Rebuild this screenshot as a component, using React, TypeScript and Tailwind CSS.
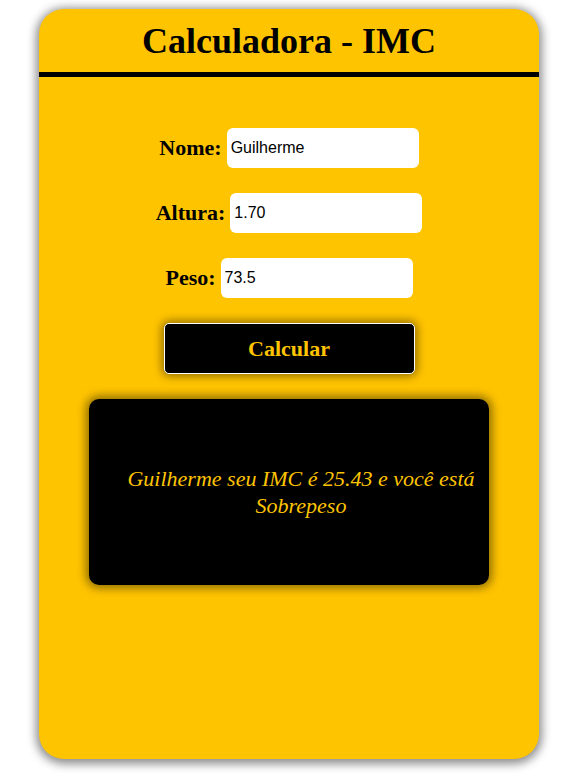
import React from "react";

export default function App() {
  const serif = { fontFamily: '"Liberation Serif", "Times New Roman", serif' };
  return (
    <div className="min-h-[781px] w-[572px] bg-white pt-[9px] pl-[39px]">
      <div
        className="w-[500px] h-[750px] rounded-[25px] bg-[#ffc400] shadow-[0_2px_10px_3px_rgba(0,0,0,0.45)] overflow-hidden flex flex-col"
        style={serif}
      >
        <div className="h-[63px] flex items-center justify-center">
          <h1 className="text-[36px] font-bold text-black leading-none" style={serif}>
            Calculadora - IMC
          </h1>
        </div>
        <div className="h-[5px] bg-black" />
        <div className="flex flex-col items-center pt-[51px] gap-[25px]">
          {[
            { label: "Nome:", value: "Guilherme" },
            { label: "Altura:", value: "1.70" },
            { label: "Peso:", value: "73.5" },
          ].map((r) => (
            <div key={r.label} className="flex items-center gap-[5px]">
              <label className="text-[22px] font-bold text-black leading-none" style={serif}>
                {r.label}
              </label>
              <input
                readOnly
                value={r.value}
                className="w-[192px] h-[40px] rounded-[6px] bg-white px-[4px] text-[16px] text-black outline-none border-0"
                style={{ fontFamily: '"Liberation Sans", Arial, sans-serif' }}
              />
            </div>
          ))}
          <button
            className="w-[251px] h-[51px] rounded-[5px] bg-black border border-white text-[#ffc400] text-[22px] font-bold shadow-[0_0_10px_2px_rgba(0,0,0,0.45)]"
            style={serif}
          >
            Calcular
          </button>
          <div className="w-[400px] h-[186px] rounded-[10px] bg-black shadow-[0_0_10px_3px_rgba(0,0,0,0.45)] flex items-center justify-center pl-[36px] pr-[12px]">
            <p className="italic text-[22px] leading-[27px] text-[#ffc400] text-center" style={serif}>
              Guilherme seu IMC é 25.43 e você está Sobrepeso
            </p>
          </div>
        </div>
      </div>
    </div>
  );
}
